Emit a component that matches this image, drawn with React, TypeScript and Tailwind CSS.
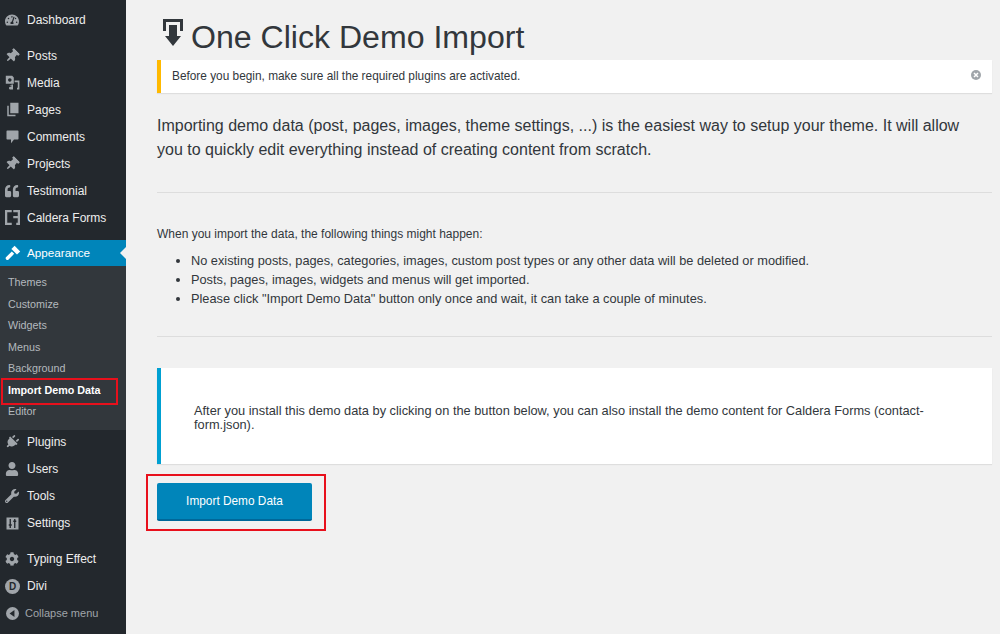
import type { ReactNode } from 'react'
import { FaThumbtack, FaQuoteLeft, FaPlug, FaUser, FaWrench, FaCog, FaTachometerAlt } from 'react-icons/fa'

const FONT = 'font-["Liberation_Sans",Arial,sans-serif]'

function MediaIcon() {
  return (
    <svg viewBox="0 0 20 20" className="w-[16px] h-[16px]" fill="currentColor">
      <path fillRule="evenodd" d="M1 1h8l2 2v8H1zM6 4a2.200 2.200 0 1 0 .01 0z" />
      <path d="M12 7h6v11h-3v-2h1V9h-4zM6 13h2v-1l2 0v6H7a1.500 1.500 0 0 1-1-3h2v-1H6z" />
    </svg>
  )
}

function PagesIcon() {
  return (
    <svg viewBox="0 0 20 20" className="w-[15px] h-[15px]" fill="currentColor">
      <path d="M7 1h11v14H7z" />
      <path d="M5 5v12h9v2H3V5z" />
    </svg>
  )
}

function CommentIcon() {
  return (
    <svg viewBox="0 0 20 20" className="w-[15px] h-[15px]" fill="currentColor">
      <path d="M3 2h14a1 1 0 0 1 1 1v10a1 1 0 0 1-1 1h-5l-4 5v-5H3a1 1 0 0 1-1-1V3a1 1 0 0 1 1-1z" />
    </svg>
  )
}

function BrushIcon() {
  return (
    <svg viewBox="0 0 20 20" className="w-[16px] h-[16px]" fill="currentColor">
      <path d="M12 1l7 7-4 4-7-7z" />
      <path d="M8.500 8l3 3-7 7a2.100 2.100 0 0 1-3-3z" />
    </svg>
  )
}

function CalderaIcon() {
  return (
    <svg viewBox="0 0 20 20" className="w-[15px] h-[15px]" fill="none" stroke="currentColor" strokeWidth="3">
      <path d="M9 1.500H1.500v17H9M11 1.500h7.500v17H15M11 9.500h7" />
    </svg>
  )
}

function SettingsIcon() {
  return (
    <svg viewBox="0 0 20 20" className="w-[15px] h-[15px]">
      <rect x="2" y="2" width="16" height="16" fill="currentColor" />
      <path d="M7 4v12M5 12h4M13 4v12M11 7h4" stroke="#23282d" strokeWidth="1.800" />
    </svg>
  )
}

function DiviIcon() {
  return (
    <span className="w-[15px] h-[15px] rounded-full bg-[#a0a5aa] flex items-center justify-center text-[10px] font-bold text-[#23282d]">D</span>
  )
}

function CollapseIcon() {
  return (
    <svg viewBox="0 0 20 20" className="w-[13px] h-[13px]">
      <circle cx="10" cy="10" r="10" fill="#a0a5aa" />
      <path d="M13 4.500v11L5.500 10z" fill="#23282d" />
    </svg>
  )
}

function ImportIcon() {
  return (
    <svg viewBox="0 0 20 27" className="w-[20px] h-[27px] shrink-0" fill="#32373c">
      <path d="M0 0h20v12h-3V3H3v9H0z" />
      <path d="M6 6h8v11h4L10 27 2 17h4z" />
    </svg>
  )
}

function MenuItem({ icon, label }: { icon: ReactNode; label: string }) {
  return (
    <div className="h-[27px] flex items-center text-[#eeeeee] text-[12px]">
      <span className="w-[27px] pl-[5px] shrink-0 flex items-center text-[#a0a5aa] text-[14px]">{icon}</span>
      <span>{label}</span>
    </div>
  )
}

const TOP_ITEMS = [
  { icon: <FaThumbtack className="rotate-45" />, label: 'Posts' },
  { icon: <MediaIcon />, label: 'Media' },
  { icon: <PagesIcon />, label: 'Pages' },
  { icon: <CommentIcon />, label: 'Comments' },
  { icon: <FaThumbtack className="rotate-45" />, label: 'Projects' },
  { icon: <FaQuoteLeft />, label: 'Testimonial' },
  { icon: <CalderaIcon />, label: 'Caldera Forms' },
]

const BOTTOM_ITEMS = [
  { icon: <FaPlug className="rotate-45" />, label: 'Plugins' },
  { icon: <FaUser />, label: 'Users' },
  { icon: <FaWrench />, label: 'Tools' },
  { icon: <SettingsIcon />, label: 'Settings' },
]

const SUB_ITEMS = ['Themes', 'Customize', 'Widgets', 'Menus', 'Background', 'Import Demo Data', 'Editor']

function Sidebar() {
  return (
    <aside className="w-[126px] shrink-0 bg-[#23282d] pt-[6px]">
      <MenuItem icon={<FaTachometerAlt />} label="Dashboard" />
      <div className="mt-[9px]">
        {TOP_ITEMS.map(i => <MenuItem key={i.label} icon={i.icon} label={i.label} />)}
      </div>
      <div className="relative mt-[9px] h-[26px] bg-[#0085ba] flex items-center text-white text-[11.700px]">
        <span className="w-[27px] pl-[5px] shrink-0 flex items-center"><BrushIcon /></span>
        <span>Appearance</span>
        <span className="absolute right-0 top-[7px] border-y-[6px] border-r-[6px] border-y-transparent border-r-[#f1f1f1]" />
      </div>
      <div className="bg-[#32373c] pt-[5.500px] pb-[7.500px] text-[10.750px] text-[#b4b9be]">
        {SUB_ITEMS.map(s => (
          <div key={s} className={s === 'Import Demo Data' ? 'relative h-[21.500px] pl-[8px] flex items-center text-white font-bold' : 'h-[21.500px] pl-[8px] flex items-center'}>
            {s}
            {s === 'Import Demo Data' && <span className="absolute left-[1px] top-[-1px] w-[117px] h-[27px] border-2 border-[#e8101c]" />}
          </div>
        ))}
      </div>
      <div className="mt-[-1px]">
        {BOTTOM_ITEMS.map(i => <MenuItem key={i.label} icon={i.icon} label={i.label} />)}
      </div>
      <div className="mt-[9px]">
        <MenuItem icon={<FaCog />} label="Typing Effect" />
        <MenuItem icon={<DiviIcon />} label="Divi" />
      </div>
      <div className="h-[27px] flex items-center text-[#a0a5aa] text-[11px]">
        <span className="w-[25px] pl-[6px] shrink-0 flex items-center"><CollapseIcon /></span>
        <span>Collapse menu</span>
      </div>
    </aside>
  )
}

function Main() {
  return (
    <main className="flex-1 pl-[31px] pr-[8px] text-[#32373c]">
      <div className="h-[60px] flex items-start pl-[6px] pt-[19px]">
        <ImportIcon />
        <h1 className="text-[32.100px] leading-[36px] ml-[8px] font-normal">One Click Demo Import</h1>
      </div>

      <div className="relative h-[33px] bg-white border-l-4 border-[#ffb900] shadow-[0_1px_1px_rgba(0,0,0,0.08)] pl-[11px] pt-[1px] flex items-center text-[11.850px]">
        Before you begin, make sure all the required plugins are activated.
        <svg viewBox="0 0 20 20" className="absolute right-[11px] top-[10px] w-[10px] h-[10px]">
          <circle cx="10" cy="10" r="10" fill="#a0a5aa" />
          <path d="M6 6l8 8M14 6l-8 8" stroke="#fff" strokeWidth="3" />
        </svg>
      </div>

      <p className="mt-[21px] pr-[20px] text-[16px] leading-[24px]">
        Importing demo data (post, pages, images, theme settings, ...) is the easiest way to setup your theme. It will allow you to quickly edit everything instead of creating content from scratch.
      </p>

      <hr className="mt-[30px] border-t border-[#dddddd]" />

      <p className="mt-[33px] text-[12px] leading-[16px]">When you import the data, the following things might happen:</p>

      <ul className="mt-[9px] pl-[34px] list-disc text-[12.770px] leading-[19px]">
        <li>No existing posts, pages, categories, images, custom post types or any other data will be deleted or modified.</li>
        <li>Posts, pages, images, widgets and menus will get imported.</li>
        <li>Please click "Import Demo Data" button only once and wait, it can take a couple of minutes.</li>
      </ul>

      <hr className="mt-[28px] border-t border-[#dddddd]" />

      <div className="mt-[31px] h-[96px] bg-white border-l-4 border-[#00a0d2] shadow-[0_1px_1px_rgba(0,0,0,0.08)] pl-[33px] pr-[60px] pt-[36px] text-[12.800px] leading-[14px]">
        After you install this demo data by clicking on the button below, you can also install the demo content for Caldera Forms (contact-form.json).
      </div>

      <div className="relative mt-[19px] w-[155px]">
        <button className="w-[155px] h-[38px] pt-[1px] bg-[#0085ba] border-b-2 border-[#006799] rounded-[2px] text-white text-[11.850px] font-normal">
          Import Demo Data
        </button>
        <span className="absolute left-[-11px] top-[-9px] w-[180px] h-[57px] border-2 border-[#e8101c]" />
      </div>
    </main>
  )
}

export default function App() {
  return (
    <div className={`flex w-[1000px] h-[634px] overflow-hidden bg-[#f1f1f1] ${FONT}`}>
      <Sidebar />
      <Main />
    </div>
  )
}
